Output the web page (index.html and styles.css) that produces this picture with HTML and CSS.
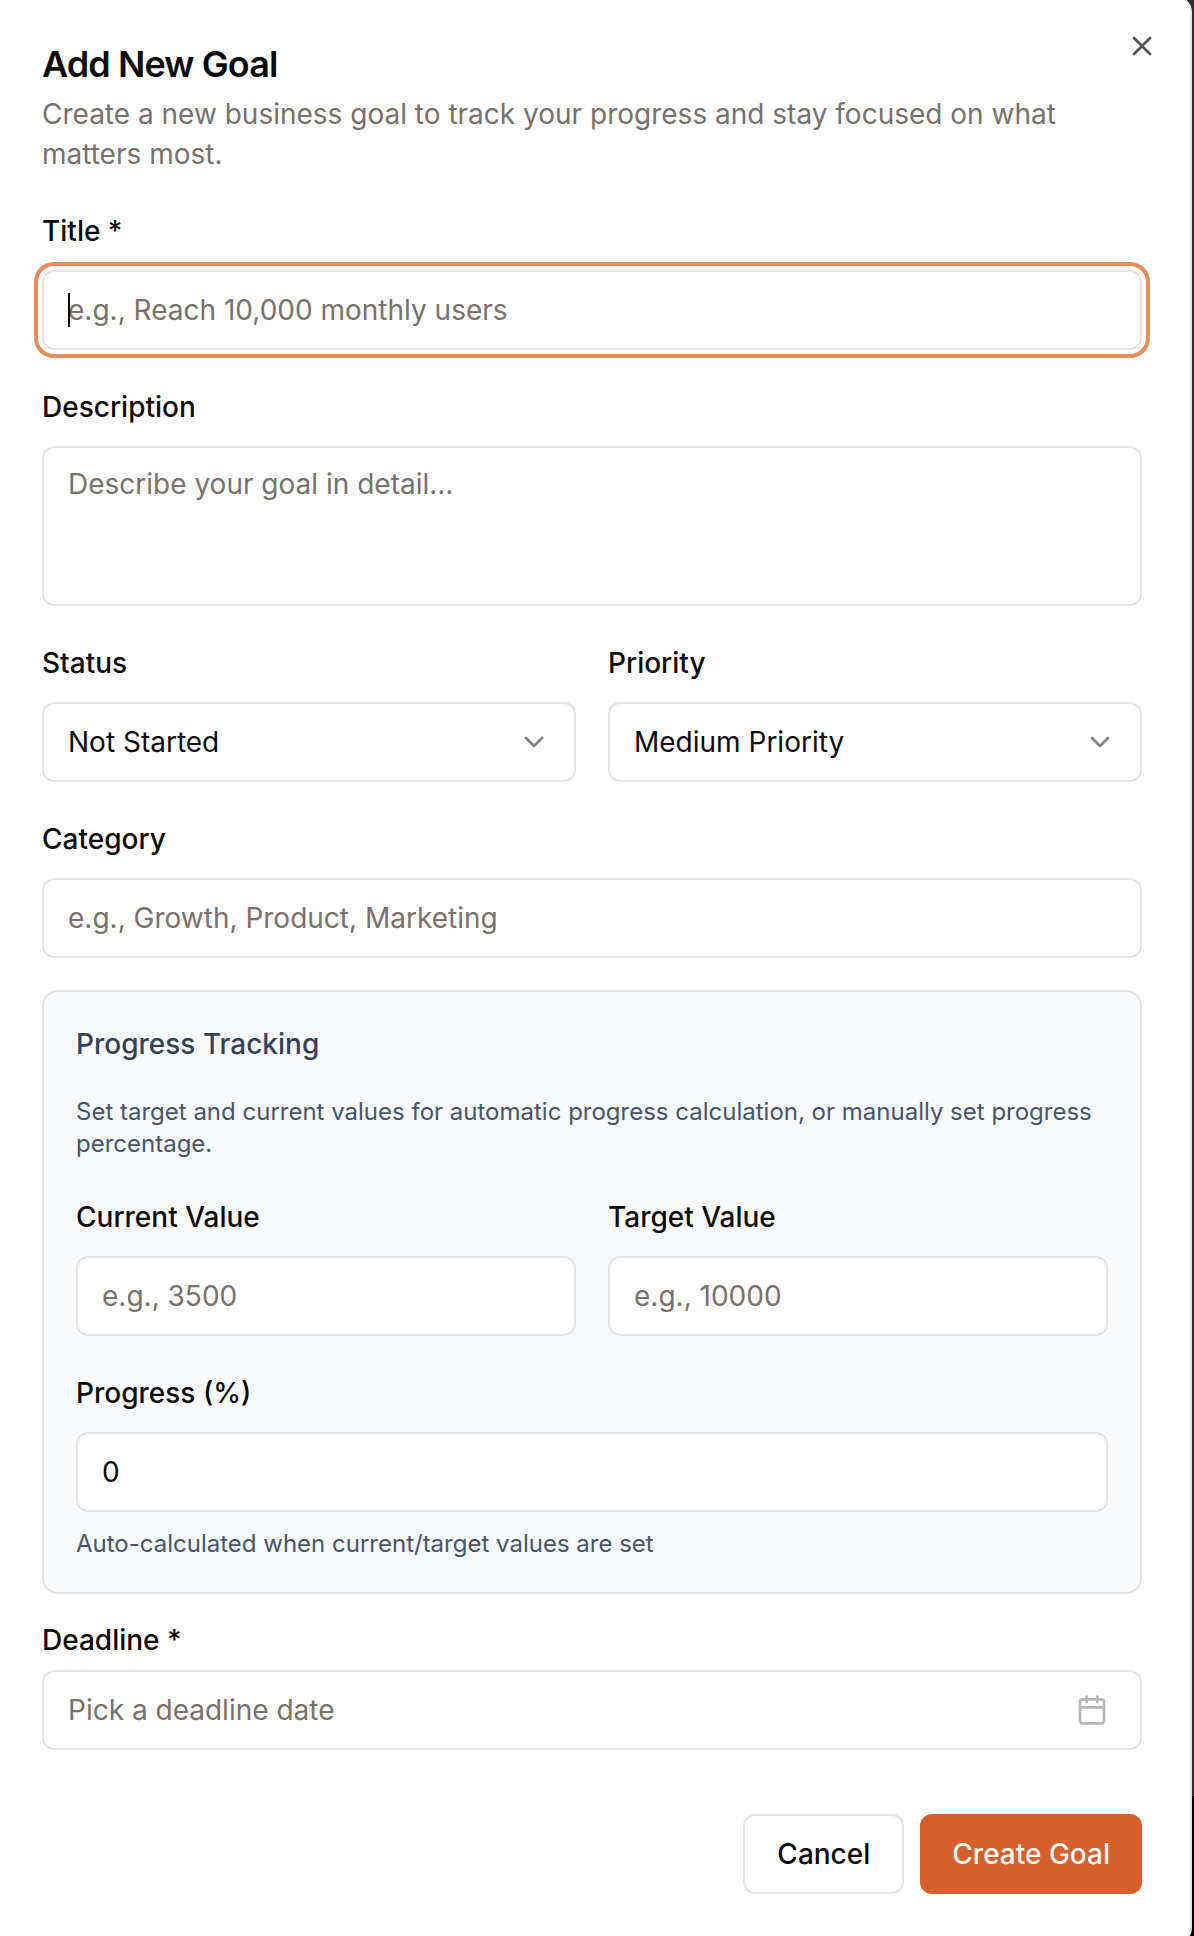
FILE: index.html
```html
<!DOCTYPE html>
<html lang="en">
<head>
<meta charset="utf-8">
<title>Add New Goal</title>
<link rel="stylesheet" href="styles.css">
</head>
<body>
<main class="dialog" role="dialog" aria-labelledby="dialog-title">
  <button class="close" aria-label="Close">
    <svg class="icon" viewBox="0 0 24 24"><path d="M18 6 6 18M6 6l12 12"/></svg>
  </button>
  <header class="header">
    <h1 class="title" id="dialog-title">Add New Goal</h1>
    <p class="subtitle">Create a new business goal to track your progress and stay focused on what matters most.</p>
  </header>
  <form class="form">
    <div class="field">
      <label class="label" for="goal-title">Title *</label>
      <div class="control-wrap">
        <input class="control control-focused" id="goal-title" placeholder="e.g., Reach 10,000 monthly users">
        <span class="caret"></span>
      </div>
    </div>
    <div class="field">
      <label class="label" for="description">Description</label>
      <textarea class="control control-area" id="description" placeholder="Describe your goal in detail..."></textarea>
    </div>
    <div class="row">
      <div class="field">
        <span class="label">Status</span>
        <button class="control select" type="button">Not Started
          <svg class="icon chevron" viewBox="0 0 24 24"><path d="m6 9 6 6 6-6"/></svg>
        </button>
      </div>
      <div class="field">
        <span class="label">Priority</span>
        <button class="control select" type="button">Medium Priority
          <svg class="icon chevron" viewBox="0 0 24 24"><path d="m6 9 6 6 6-6"/></svg>
        </button>
      </div>
    </div>
    <div class="field">
      <label class="label" for="category">Category</label>
      <input class="control" id="category" placeholder="e.g., Growth, Product, Marketing">
    </div>
    <section class="panel">
      <h2 class="panel-title">Progress Tracking</h2>
      <p class="note">Set target and current values for automatic progress calculation, or manually set progress percentage.</p>
      <div class="row">
        <div class="field">
          <label class="label" for="current">Current Value</label>
          <input class="control" id="current" placeholder="e.g., 3500">
        </div>
        <div class="field">
          <label class="label" for="target">Target Value</label>
          <input class="control" id="target" placeholder="e.g., 10000">
        </div>
      </div>
      <div class="field">
        <label class="label" for="progress">Progress (%)</label>
        <input class="control" id="progress" value="0">
        <p class="note">Auto-calculated when current/target values are set</p>
      </div>
    </section>
    <div class="field">
      <span class="label label-tight">Deadline *</span>
      <button class="control select date" type="button">Pick a deadline date
        <svg class="icon calendar" viewBox="0 0 24 24"><path d="M8 2v4M16 2v4M3 10h18"/><rect x="3" y="4" width="18" height="18" rx="2"/></svg>
      </button>
    </div>
    <footer class="footer">
      <button class="button button-outline" type="button">Cancel</button>
      <button class="button button-primary" type="button">Create Goal</button>
    </footer>
  </form>
</main>
</body>
</html>
```
FILE: styles.css
```css
* {
  box-sizing: border-box;
  margin: 0;
}

html {
  height: 1936px;
  overflow: hidden;
}

body {
  height: 1936px;
  overflow: hidden;
  background: linear-gradient(#2e2e2c 1796px, #000 1796px);
  color: #0c0a09;
  font-family: Inter, sans-serif;
  font-size: 28px;
  line-height: 40px;
}

.dialog {
  position: relative;
  width: 1200px;
  height: 1948px;
  margin: -4px 0 0 -8px;
  padding: 48px;
  border: 2px solid #e5e5e5;
  border-radius: 16px;
  background: #fff;
}

.close {
  position: absolute;
  top: 32px;
  right: 32px;
  width: 32px;
  height: 32px;
  padding: 0;
  border: 0;
  background: none;
  color: inherit;
  opacity: 0.7;
}

.icon {
  display: block;
  flex: none;
  width: 32px;
  height: 32px;
  fill: none;
  stroke: currentColor;
  stroke-width: 2;
  stroke-linecap: round;
  stroke-linejoin: round;
}

.header {
  display: flex;
  flex-direction: column;
  gap: 12px;
  margin-bottom: 32px;
}

.title {
  font-size: 36px;
  font-weight: 600;
  line-height: 36px;
  letter-spacing: -0.9px;
}

.subtitle {
  color: #78716c;
}

.form {
  display: flex;
  flex-direction: column;
  gap: 32px;
}

.field {
  display: flex;
  flex-direction: column;
  gap: 16px;
}

.row {
  display: grid;
  grid-template-columns: 1fr 1fr;
  gap: 32px;
}

.label {
  padding-top: 2px;
  font-weight: 500;
  line-height: 46px;
}

.label-tight {
  padding-top: 0;
  line-height: 28px;
}

.control-wrap {
  position: relative;
}

.control {
  display: block;
  width: 100%;
  height: 80px;
  padding: 0 24px;
  border: 2px solid #e5e5e5;
  border-radius: 12px;
  outline: none;
  background: #fff;
  color: inherit;
  font: inherit;
}

.control::placeholder {
  color: #78716c;
  opacity: 1;
}

.control-focused {
  box-shadow: 0 0 0 4px #fff, 0 0 0 8px #e58e5c;
}

.control-area {
  height: 160px;
  padding: 16px 24px;
  resize: none;
}

.caret {
  position: absolute;
  top: 23px;
  left: 26px;
  width: 2px;
  height: 34px;
  background: #0c0a09;
}

.select {
  display: flex;
  align-items: center;
  justify-content: space-between;
}

.chevron {
  opacity: 0.5;
}

.date {
  padding-right: 32px;
  color: #78716c;
}

.calendar {
  opacity: 0.5;
}

.panel {
  display: flex;
  flex-direction: column;
  gap: 32px;
  padding: 32px;
  border: 2px solid #e5e5e5;
  border-radius: 16px;
  background: #f8fafc;
}

.panel-title {
  color: #334155;
  font-size: 28px;
  font-weight: 500;
}

.note {
  color: #475569;
  font-size: 24px;
  line-height: 32px;
}

.footer {
  display: flex;
  justify-content: flex-end;
  gap: 16px;
  padding-top: 32px;
}

.button {
  height: 80px;
  padding: 0 32px;
  border: 0;
  border-radius: 12px;
  font: inherit;
  font-weight: 500;
}

.button-outline {
  border: 2px solid #e5e5e5;
  background: #fff;
  color: inherit;
}

.button-primary {
  background: #d6602b;
  color: #fafaf9;
}
```
